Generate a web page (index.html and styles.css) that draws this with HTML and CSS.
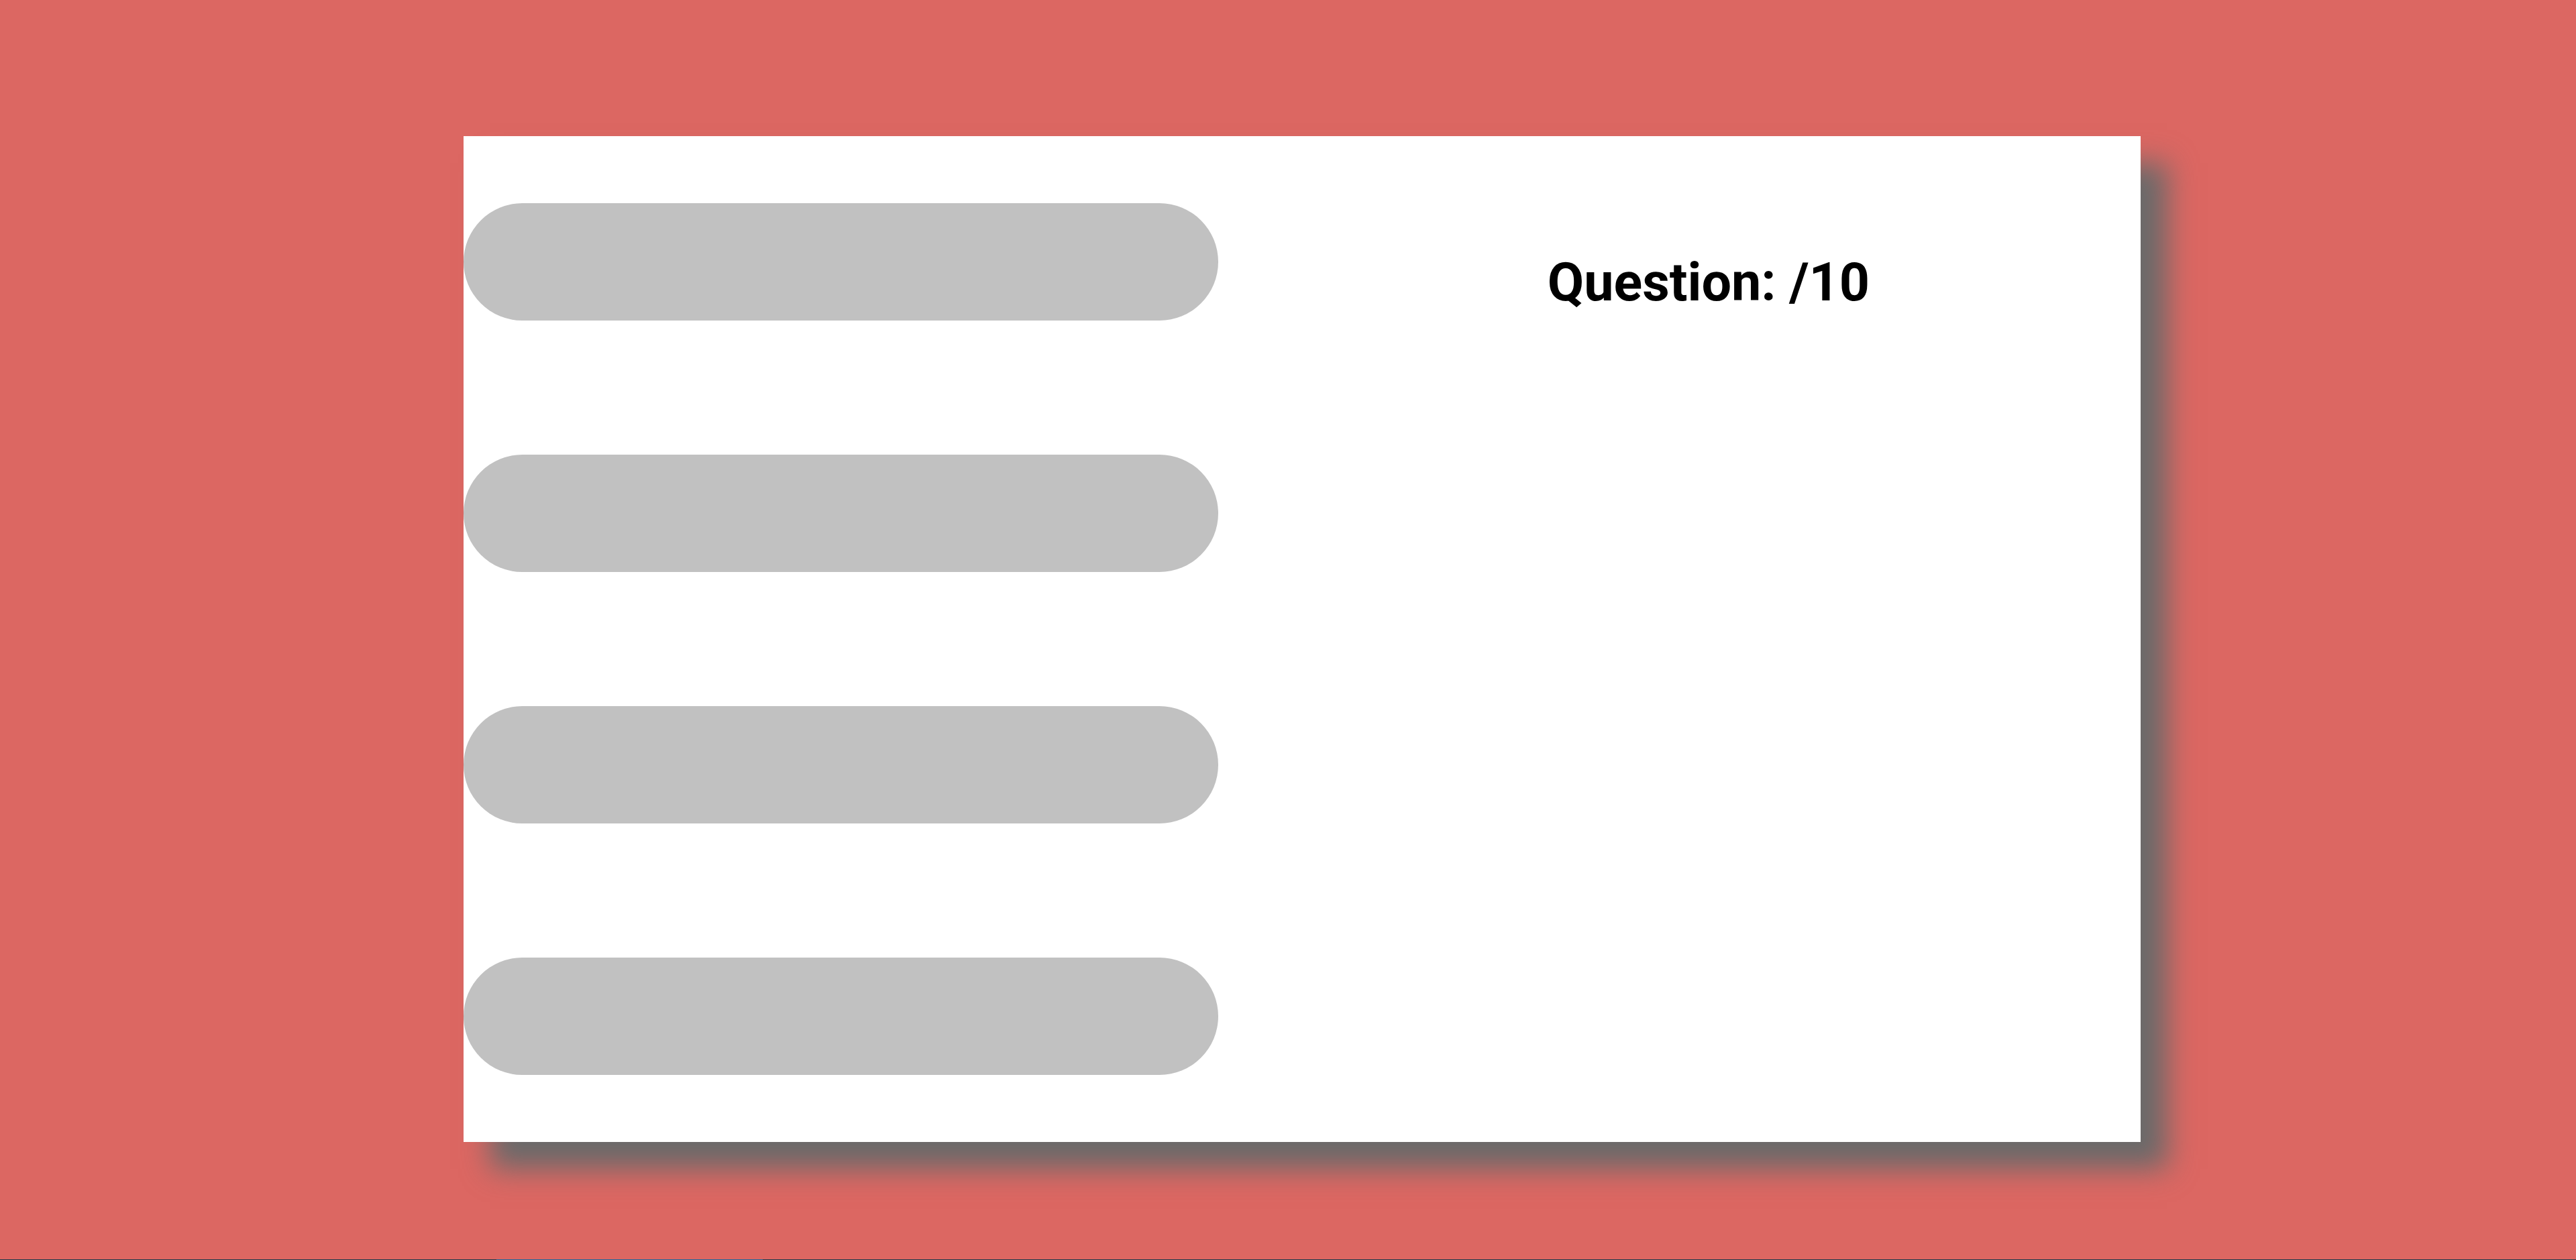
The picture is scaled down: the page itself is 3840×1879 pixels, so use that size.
FILE: index.html
```html
<!DOCTYPE html>
<html lang="en">
<head>
<meta charset="utf-8">
<title>Quiz</title>
<link rel="stylesheet" href="styles.css">
</head>
<body>
<main class="stage">
  <section class="card">
    <div class="answers">
      <button class="answer" type="button"></button>
      <button class="answer" type="button"></button>
      <button class="answer" type="button"></button>
      <button class="answer" type="button"></button>
    </div>
    <div class="info">
      <h1 class="counter">Question: <span class="num"></span>/10</h1>
    </div>
  </section>
</main>
<div class="bottom-bar"><div class="bottom-thumb"></div></div>
</body>
</html>
```
FILE: styles.css
```css
html, body {
  margin: 0;
  padding: 0;
}
body {
  background: #dc6762;
  width: 3840px;
  height: 1879px;
  overflow: hidden;
  font-family: "Liberation Sans", Arial, sans-serif;
}
.stage {
  padding: 203px 0 0 691px;
}
.card {
  width: 2500px;
  height: 1500px;
  background: #ffffff;
  box-shadow: 40px 40px 40px #6a6a6a;
  display: grid;
  grid-template-columns: 1125px 1fr;
}
.answers {
  display: flex;
  flex-direction: column;
  justify-content: space-around;
}
.answer {
  display: block;
  width: 1125px;
  height: 175px;
  border: none;
  border-radius: 88px;
  background: #c1c1c1;
  padding: 0;
  margin: 0;
}
.info {
  text-align: center;
  padding-top: 179px;
  padding-left: 87px;
}
.counter {
  margin: 0;
  font-family: Roboto, "Liberation Sans", sans-serif;
  font-size: 79px;
  line-height: 1;
  font-weight: 700;
  letter-spacing: 0;
  color: #000;
}
.bottom-bar {
  position: fixed;
  left: 0;
  right: 0;
  bottom: 0;
  height: 1px;
  background: #1c3a4a;
}
.bottom-thumb {
  margin-left: 740px;
  width: 397px;
  height: 1px;
  background: #1d679c;
}
```
